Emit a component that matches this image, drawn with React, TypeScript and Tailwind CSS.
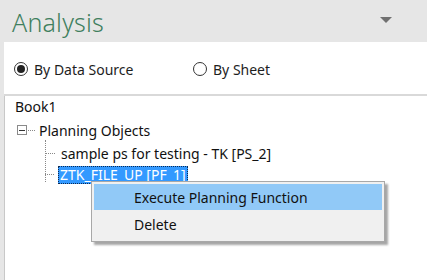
import React from "react";

function Dots({ className }: { className: string }) {
  return <div className={className} />;
}

export default function App() {
  return (
    <div
      className="w-[427px] h-[280px] bg-[#e6e6e6] flex flex-col overflow-hidden"
      style={{ fontFamily: '"Noto Sans", "Open Sans", sans-serif' }}
    >
      <div className="h-[42px] flex items-start justify-between pl-[12px] pr-[35px] shrink-0">
        <div className="text-[25px] leading-none mt-[10px] text-[#3f7f5e] font-light tracking-[0.2px]">
          Analysis
        </div>
        <svg width="12" height="7" viewBox="0 0 12 7" className="mt-[17px]">
          <polygon points="0,0 12,0 6,6" fill="#707070" />
        </svg>
      </div>
      <div className="flex-1 ml-[4px] bg-white flex flex-col">
        <div className="h-[54px] flex items-center pt-[2px] pl-[10px] text-[14px] text-[#1e1e1e] border-b-2 border-[#d9d9d9]">
          <div className="flex items-center w-[179px]">
            <span className="w-[14px] h-[14px] rounded-full border border-[#333] flex items-center justify-center mr-[6px]">
              <span className="w-[8px] h-[8px] rounded-full bg-[#222]" />
            </span>
            By Data Source
          </div>
          <div className="flex items-center">
            <span className="w-[14px] h-[14px] rounded-full border border-[#333] mr-[6px]" />
            By Sheet
          </div>
        </div>
        <div className="flex-1 relative text-[14px] text-[#111] border-l border-[#c8c8c8]">
          <div className="pl-[10px] h-[22px] leading-[22px]">Book1</div>
          <div className="flex items-center h-[24px] pl-[12px]">
            <span className="w-[10px] h-[10px] border border-[#8a8a8a] flex items-center justify-center">
              <span className="w-[6px] h-[1px] bg-[#333]" />
            </span>
            <Dots className="w-[7px] border-t border-dotted border-[#888] mx-[1px]" />
            <span className="ml-[3px]">Planning Objects</span>
          </div>
          <div className="relative pl-[40px]">
            <Dots className="absolute left-[40px] top-[-2px] h-[42px] border-l border-dotted border-[#888]" />
            <div className="flex items-center h-[22px]">
              <Dots className="w-[10px] border-t border-dotted border-[#888]" />
              <span className="ml-[6px]">sample ps for testing - TK [PS_2]</span>
            </div>
            <div className="flex items-end h-[20px]">
              <Dots className="w-[9px] border-t border-dotted border-[#888] mb-[9px]" />
              <span className="ml-[4px] bg-[#3399ff] text-white px-[2px] h-[18px] leading-[18px] outline-1 outline-dotted outline-[#0a2a55] -outline-offset-1">
                ZTK_FILE_UP [PF_1]
              </span>
            </div>
          </div>
          <div className="absolute left-[86px] top-[85px] w-[294px] bg-[#f0f0f0] border border-[#a8a8a8] shadow-[3px_3px_2px_rgba(0,0,0,0.35)] p-[2px] text-[14px] text-[#111]">
            <div className="h-[26px] bg-[#91c9f7] flex items-center pl-[40px]">
              Execute Planning Function
            </div>
            <div className="h-[29px] flex items-center pl-[40px]">Delete</div>
          </div>
        </div>
      </div>
    </div>
  );
}
